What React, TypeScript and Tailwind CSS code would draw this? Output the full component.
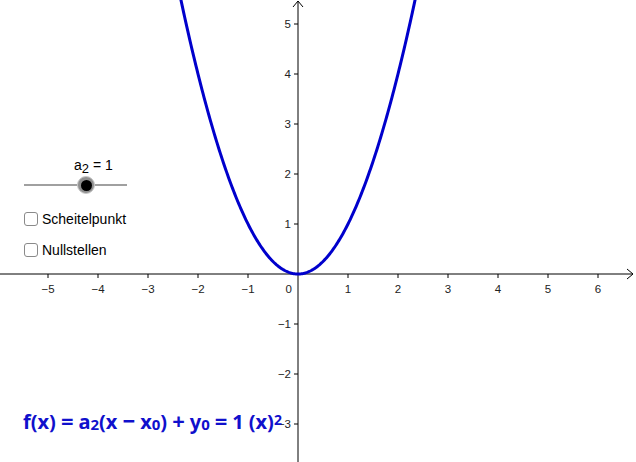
import React from "react";

const OX = 298;
const OY = 274;
const U = 50;

const xTicks = [-5, -4, -3, -2, -1, 1, 2, 3, 4, 5, 6];
const yTicks = [-3, -2, -1, 1, 2, 3, 4, 5];

function label(n: number) {
  return n < 0 ? `\u2212${Math.abs(n)}` : `${n}`;
}

function parabolaPath() {
  const pts: string[] = [];
  for (let i = 0; i <= 240; i++) {
    const x = -2.45 + (4.9 * i) / 240;
    const px = OX + U * x;
    const py = OY - U * x * x;
    pts.push(`${i === 0 ? "M" : "L"}${px.toFixed(2)},${py.toFixed(2)}`);
  }
  return pts.join(" ");
}

function Graph() {
  return (
    <svg className="absolute inset-0" width={636} height={462} viewBox="0 0 636 462">
      {/* axes */}
      <line x1={0} y1={OY} x2={633} y2={OY} stroke="#000" strokeWidth={1} />
      <path d={`M627,${OY - 5} L633,${OY} L627,${OY + 5}`} fill="none" stroke="#000" strokeWidth={1} />
      <line x1={OX} y1={1} x2={OX} y2={462} stroke="#000" strokeWidth={1} />
      <path d={`M${OX - 5},7 L${OX},1 L${OX + 5},7`} fill="none" stroke="#000" strokeWidth={1} />

      <g fontFamily='"Liberation Sans", Arial, sans-serif' fontSize={11.5} fill="#222">
        {xTicks.map((n) => (
          <g key={`x${n}`}>
            <line x1={OX + n * U} y1={OY} x2={OX + n * U} y2={OY + 4} stroke="#000" />
            <text x={OX + n * U} y={OY + 19} textAnchor="middle">
              {label(n)}
            </text>
          </g>
        ))}
        {yTicks.map((n) => (
          <g key={`y${n}`}>
            <line x1={OX - 4} y1={OY - n * U} x2={OX} y2={OY - n * U} stroke="#000" />
            <text x={OX - 7} y={OY - n * U + 4} textAnchor="end">
              {label(n)}
            </text>
          </g>
        ))}
        <text x={OX - 6} y={OY + 19} textAnchor="end">
          0
        </text>
      </g>

      <path d={parabolaPath()} fill="none" stroke="#0000cc" strokeWidth={3} strokeLinejoin="round" />
    </svg>
  );
}

function Slider() {
  return (
    <div className="flex flex-col w-[103px]">
      <div className="pl-[50px] text-[14px] leading-none text-black whitespace-nowrap">
        a<sub className="text-[13px] relative top-[3px]">2</sub> = 1
      </div>
      <div className="relative h-[18px] mt-[4px] flex items-center">
        <div className="h-[2px] w-full bg-[#a0a0a0]" />
        {/* knob sits on top of the track */}
        <div className="absolute left-[53px] top-0 w-[18px] h-[18px] rounded-full bg-[#8f8f8f] border border-[#c8c8c8] flex items-center justify-center">
          <div className="w-[11px] h-[11px] rounded-full bg-black" />
        </div>
      </div>
    </div>
  );
}

function Check({ text }: { text: string }) {
  return (
    <div className="flex items-center gap-[4px] h-[16px]">
      <div className="w-[14px] h-[14px] rounded-[3px] border border-[#8a8a8a] bg-white" />
      <span className="text-[14px] leading-none text-black">{text}</span>
    </div>
  );
}

function Formula() {
  return (
    <div className="text-[20px] leading-none font-bold text-[#1010cc] whitespace-nowrap font-['Noto_Sans',sans-serif] flex items-baseline gap-[5px]">
      <span>f(x)</span>
      <span className="text-[22px]">=</span>
      <span>
        a<sub className="text-[15px] relative top-[1px]">2</sub>(x
      </span>
      <span className="text-[22px]">−</span>
      <span>
        x<sub className="text-[15px] relative top-[1px]">0</sub>)
      </span>
      <span className="text-[22px]">+</span>
      <span>
        y<sub className="text-[15px] relative top-[1px]">0</sub>
      </span>
      <span className="text-[22px]">=</span>
      <span>1</span>
      <span>
        (x)<sup className="text-[14px] relative top-[-4px]">2</sup>
      </span>
    </div>
  );
}

export default function App() {
  return (
    <div className="relative w-[636px] h-[462px] bg-white overflow-hidden font-['Liberation_Sans',Arial,sans-serif]">
      <Graph />
      {/* controls float over the graph canvas */}
      <div className="absolute left-[24px] top-[158px] flex flex-col">
        <Slider />
        <div className="flex flex-col gap-[15px] mt-[17px]">
          <Check text="Scheitelpunkt" />
          <Check text="Nullstellen" />
        </div>
      </div>
      <div className="absolute left-[23px] top-[409px]">
        <Formula />
      </div>
    </div>
  );
}
